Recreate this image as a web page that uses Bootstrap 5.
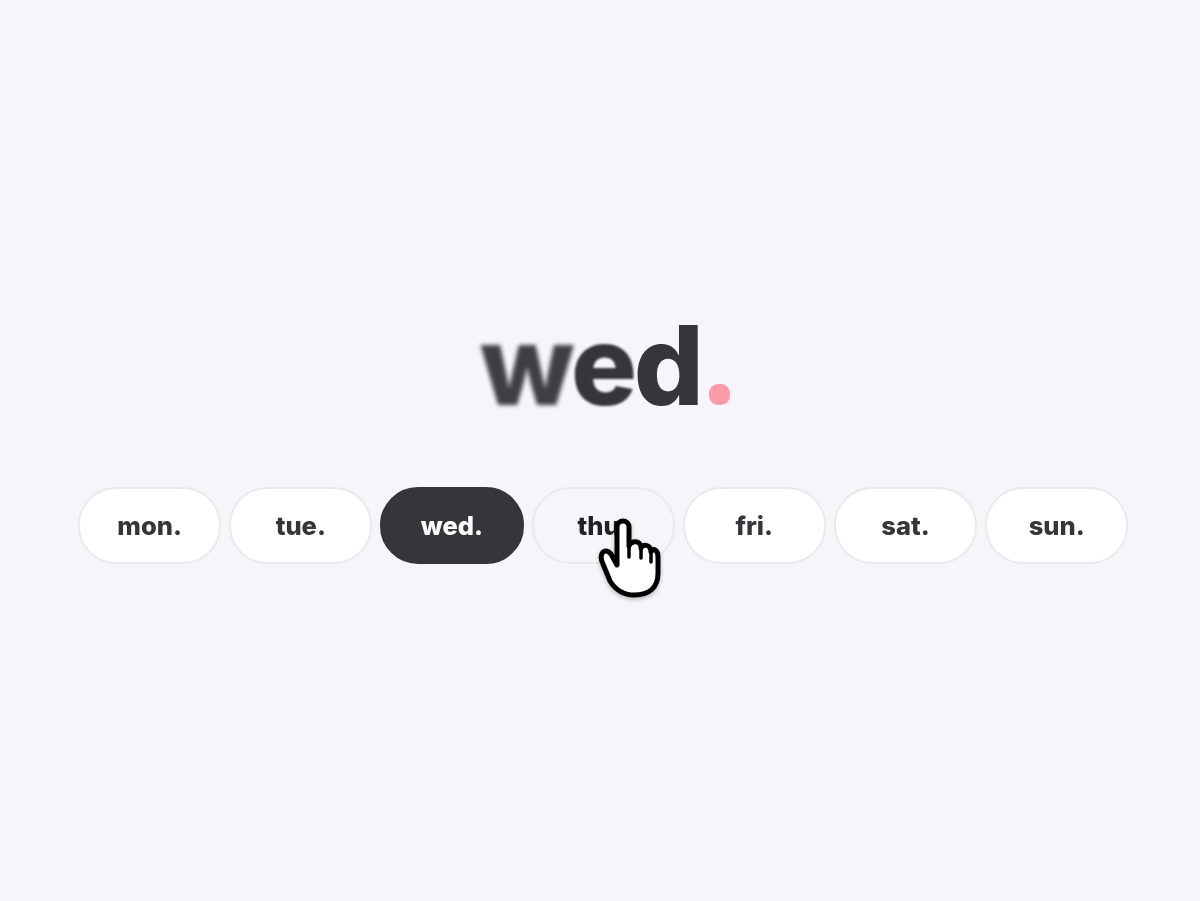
<!doctype html>
<html lang="en">
<head>
<meta charset="utf-8">
<title>wed.</title>
<link href="https://cdn.jsdelivr.net/npm/bootstrap@5.3.0/dist/css/bootstrap.min.css" rel="stylesheet">
<style>
html,body{height:100%;}
body{background:#f7f5f9;font-family:"Inter","Liberation Sans",sans-serif;overflow:hidden;}
.stage{padding-top:299px;}
.headline{font-family:"Inter","Liberation Sans",sans-serif;font-weight:800;font-size:110px;line-height:132px;color:#38353a;letter-spacing:-3.5px;height:132px;padding-left:10px;}
.headline span{display:inline-block;}
.blur-a{filter:blur(2.2px);opacity:.95;}
.blur-b{filter:blur(1.3px);}
.blur-c{filter:blur(.6px);}
.dot-pink{display:inline-block;width:21px;height:21px;border-radius:9px;background:#fd9bac;margin-left:9px;filter:blur(.3px);}
.pill-row{margin-top:56px;padding-left:78px;}
.day-pill{width:143.2px;height:77px;flex:none;border-radius:38px;background:#fff;border:2px solid #eae9ec;color:#38353a;font-weight:800;font-size:25.5px;line-height:1;padding:1px 0 0;display:flex;align-items:center;justify-content:center;position:relative;filter:blur(.3px);}
.day-pill.is-on{background:#38353a;border-color:#38353a;color:#fff;}
.day-pill.is-hover{background:#f7f5f9;color:#232125;}
.hand{position:absolute;left:61px;top:24px;width:72px;height:92px;filter:drop-shadow(0 2px 2px rgba(0,0,0,.25));}
</style>
</head>
<body>
<div class="stage">
  <div class="d-flex justify-content-center align-items-baseline headline">
    <span class="blur-a">w</span><span class="blur-b">e</span><span class="blur-c">d</span><i class="dot-pink"></i>
  </div>
  <div class="d-flex gap-2 pill-row">
    <button class="btn day-pill">mon.</button>
    <button class="btn day-pill">tue.</button>
    <button class="btn day-pill is-on">wed.</button>
    <button class="btn day-pill is-hover">thu.
      <svg class="hand" viewBox="595 512 72 92" aria-hidden="true">
        <path d="M617 564 L617 526 C617 518 629 518 629 526 L629 545 C631 539 641 539 641 547 C643 542 651 544 651 551 C653 546 658 549 658 556 L658 572 C658 586 650 594 634 594 C622 594 615 588 610 580 L603 563 C598 552 605 546 611 553 Z" fill="#fff" stroke="#000" stroke-width="5" stroke-linejoin="round"/>
        <path d="M629 545 L629 556 M641 547 L641 557 M651 551 L651 561" fill="none" stroke="#000" stroke-width="3.5" stroke-linecap="round"/>
      </svg>
    </button>
    <button class="btn day-pill">fri.</button>
    <button class="btn day-pill">sat.</button>
    <button class="btn day-pill">sun.</button>
  </div>
</div>
<script src="https://cdn.jsdelivr.net/npm/bootstrap@5.3.0/dist/js/bootstrap.bundle.min.js"></script>
</body>
</html>
